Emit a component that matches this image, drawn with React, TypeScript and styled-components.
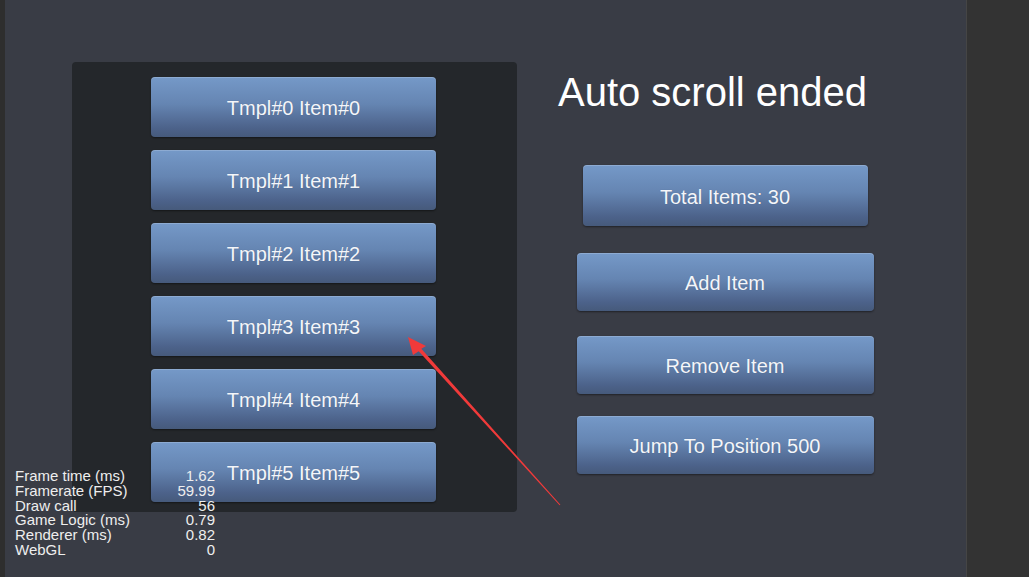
import React from "react";
import styled, { createGlobalStyle } from "styled-components";

const Global = createGlobalStyle`
  html, body { margin: 0; padding: 0; background: #333333; }
  body { font-family: "Liberation Sans", Arial, sans-serif; overflow: hidden; }
`;

const Page = styled.div`
  position: relative;
  display: flex;
  width: 1029px;
  height: 577px;
  overflow: hidden;
`;

const LeftStrip = styled.div`
  width: 5px;
  background: #2e2e2e;
`;

const Canvas = styled.div`
  width: 961px;
  background: #393c45;
  display: flex;
  align-items: flex-start;
  padding: 62px 0 0 67px;
  box-sizing: border-box;
`;

const Divider = styled.div`
  width: 1px;
  background: #454545;
`;

const RightPanel = styled.div`
  flex: 1;
  background: #333333;
`;

const ScrollView = styled.div`
  width: 445px;
  height: 450px;
  background: #24272b;
  border-radius: 4px;
  box-sizing: border-box;
  padding: 15px 0 0 79px;
  display: flex;
  flex-direction: column;
  gap: 13px;
  overflow: hidden;
`;

const Btn = styled.div<{ $w: number; $h: number }>`
  width: ${(p) => p.$w}px;
  height: ${(p) => p.$h}px;
  flex: none;
  box-sizing: border-box;
  padding-top: 3px;
  border-radius: 4px;
  background: linear-gradient(180deg, #7599c8 0%, #6585b2 45%, #4c628a 85%, #465a7b 100%);
  box-shadow: inset 0 1px 0 rgba(255, 255, 255, 0.18), 0 1px 2px rgba(0, 0, 0, 0.45);
  display: flex;
  align-items: center;
  justify-content: center;
  color: #f4f6fa;
  font-size: 20px;
  text-shadow: 0 0 1px rgba(0, 0, 0, 0.2);
`;

const RightColumn = styled.div`
  margin-left: 53px;
  width: 310px;
  display: flex;
  flex-direction: column;
  align-items: center;
`;

const Title = styled.div`
  margin-top: 5px;
  font-size: 40px;
  line-height: 50px;
  color: #ffffff;
  margin-left: -25px;
`;

const Spacer = styled.div<{ $h: number }>`
  height: ${(p) => p.$h}px;
  flex: none;
`;

const Stats = styled.div`
  position: absolute;
  left: 15px;
  top: 469px;
  width: 200px;
  display: grid;
  grid-template-columns: 1fr auto;
  font-size: 15px;
  line-height: 14.8px;
  color: #eeeeee;
  pointer-events: none;
`;

const StatValue = styled.span`
  text-align: right;
`;

const Overlay = styled.svg`
  position: absolute;
  left: 0;
  top: 0;
  pointer-events: none;
`;

const stats: [string, string][] = [
  ["Frame time (ms)", "1.62"],
  ["Framerate (FPS)", "59.99"],
  ["Draw call", "56"],
  ["Game Logic (ms)", "0.79"],
  ["Renderer (ms)", "0.82"],
  ["WebGL", "0"],
];

export default function App() {
  return (
    <>
      <Global />
      <Page>
        <LeftStrip />
        <Canvas>
          <ScrollView>
            {[0, 1, 2, 3, 4, 5].map((i) => (
              <Btn key={i} $w={285} $h={60}>
                {`Tmpl#${i} Item#${i}`}
              </Btn>
            ))}
          </ScrollView>
          <RightColumn>
            <Title>Auto scroll ended</Title>
            <Spacer $h={48} />
            <Btn $w={285} $h={61}>Total Items: 30</Btn>
            <Spacer $h={27} />
            <Btn $w={297} $h={58}>Add Item</Btn>
            <Spacer $h={25} />
            <Btn $w={297} $h={58}>Remove Item</Btn>
            <Spacer $h={22} />
            <Btn $w={297} $h={58}>Jump To Position 500</Btn>
          </RightColumn>
        </Canvas>
        <Divider />
        <RightPanel />
        <Stats>
          {stats.map(([k, v]) => (
            <React.Fragment key={k}>
              <span>{k}</span>
              <StatValue>{v}</StatValue>
            </React.Fragment>
          ))}
        </Stats>
        <Overlay width="1029" height="577" viewBox="0 0 1029 577">
          <polygon
            points="408,337 426,346 421.3,348.8 560.4,504.7 559.6,505.3 418.7,351.2 413,355"
            fill="#f03a3a"
          />
        </Overlay>
      </Page>
    </>
  );
}
